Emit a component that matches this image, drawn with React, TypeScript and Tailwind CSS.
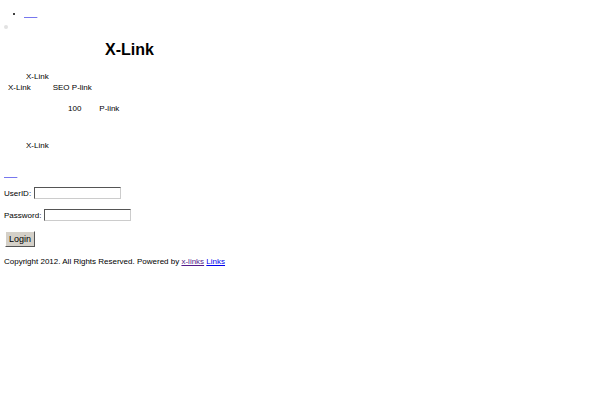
export default function App() {
  return (
    <div className="w-[600px] h-[400px] bg-white text-black text-[8px] leading-[11px] font-['Liberation_Sans',Arial,sans-serif] px-[4px] pt-[8px]">
      <ul className="list-disc pl-[20px]">
        <li>
          <a href="#" className="text-[#7777ee] underline">&nbsp;&nbsp;&nbsp;&nbsp;&nbsp;&nbsp;</a>
        </li>
      </ul>
      <div className="mt-[6px] w-[4px] h-[4px] rounded-full bg-[#e2e2e2]" />
      <h1 className="mt-[12px] ml-[101px] text-[16px] leading-[18px] font-bold">X-Link</h1>
      <div className="mt-[12px] ml-[22px]">X-Link</div>
      <div className="flex ml-[4px]">
        <span>X-Link</span>
        <span className="ml-[22px]">SEO P-link</span>
      </div>
      <div className="flex mt-[10px] ml-[64px]">
        <span>100</span>
        <span className="ml-[18px]">P-link</span>
      </div>
      <div className="mt-[26px] ml-[22px]">X-Link</div>
      <div className="mt-[17px]">
        <a href="#" className="text-[#7777ee] underline">&nbsp;&nbsp;&nbsp;&nbsp;&nbsp;&nbsp;</a>
      </div>
      <div className="mt-[8px] flex items-center gap-[3px]">
        <span>UserID:</span>
        <input className="w-[87px] h-[12px] border border-t-[#555] border-l-[#555] border-b-[#ccc] border-r-[#ccc] bg-white" />
      </div>
      <div className="mt-[10px] flex items-center gap-[3px]">
        <span>Password:</span>
        <input type="password" className="w-[87px] h-[12px] border border-t-[#555] border-l-[#555] border-b-[#ccc] border-r-[#ccc] bg-white" />
      </div>
      <button className="mt-[10px] ml-[1px] h-[16px] px-[3px] bg-[#d4d0c8] border border-t-[#fff] border-l-[#fff] border-b-[#555] border-r-[#555] text-[9px] leading-[12px]">
        Login
      </button>
      <div className="mt-[9px]">
        Copyright 2012. All Rights Reserved. Powered by{" "}
        <a href="#" className="text-[#551a8b] underline">x-links</a>{" "}
        <a href="#" className="text-[#0000ee] underline">Links</a>
      </div>
    </div>
  );
}
